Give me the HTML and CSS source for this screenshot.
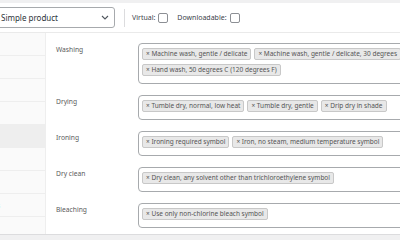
FILE: index.html
```html
<!DOCTYPE html>
<html>
<head>
<meta charset="utf-8">
<link rel="stylesheet" href="styles.css">
</head>
<body>
<div class="panel">
  <div class="header">
    <div class="select">
      <span class="select-text">Simple product</span>
      <svg class="chev" width="8" height="5" viewBox="0 0 8 5"><path d="M1 1 L4 4 L7 1" fill="none" stroke="#50575e" stroke-width="1.1"/></svg>
    </div>
    <div class="sep"></div>
    <label class="opt">Virtual: <span class="cb"></span></label>
    <label class="opt">Downloadable: <span class="cb"></span></label>
  </div>
  <div class="body">
    <ul class="tabs">
      <li class="tab"></li>
      <li class="tab"></li>
      <li class="tab"></li>
      <li class="tab"></li>
      <li class="tab active"></li>
      <li class="tab"></li>
      <li class="tab"></li>
      <li class="tab"><span class="tab-text">s</span></li>
      <li class="tab last"></li>
    </ul>
    <div class="main">
      <div class="field">
        <div class="label">Washing</div>
        <ul class="box">
          <li class="tag">× Machine wash, gentle / delicate</li>
          <li class="tag">× Machine wash, gentle / delicate, 30 degrees</li>
          <li class="tag">× Hand wash, 50 degrees C (120 degrees F)</li>
        </ul>
      </div>
      <div class="field">
        <div class="label">Drying</div>
        <ul class="box">
          <li class="tag">× Tumble dry, normal, low heat</li>
          <li class="tag">× Tumble dry, gentle</li>
          <li class="tag">× Drip dry in shade</li>
        </ul>
      </div>
      <div class="field">
        <div class="label">Ironing</div>
        <ul class="box">
          <li class="tag">× Ironing required symbol</li>
          <li class="tag">× Iron, no steam, medium temperature symbol</li>
        </ul>
      </div>
      <div class="field">
        <div class="label">Dry clean</div>
        <ul class="box">
          <li class="tag">× Dry clean, any solvent other than trichloroethylene symbol</li>
        </ul>
      </div>
      <div class="field">
        <div class="label">Bleaching</div>
        <ul class="box">
          <li class="tag">× Use only non-chlorine bleach symbol</li>
        </ul>
      </div>
    </div>
  </div>
</div>
</body>
</html>
```
FILE: styles.css
```css
html, body {
  margin: 0;
  padding: 0;
}
body {
  width: 400px;
  height: 240px;
  overflow: hidden;
  background: #f0f0f1;
  font-family: "Noto Sans", "Open Sans", sans-serif;
  color: #3c434a;
}
.panel {
  margin-top: 3px;
  margin-left: -20px;
  width: 460px;
  background: #fff;
  border-bottom: 1px solid #dcdcde;
}
.header {
  display: flex;
  align-items: center;
  height: 29px;
  border-bottom: 1px solid #eaeaea;
}
.select {
  display: flex;
  align-items: center;
  justify-content: space-between;
  box-sizing: border-box;
  width: 135px;
  height: 21px;
  padding: 0 5px 0 20px;
  border: 1px solid #a7aaad;
  border-radius: 3px;
  font-size: 8px;
  color: #2c3338;
}
.chev {
  display: block;
}
.sep {
  width: 1px;
  height: 18px;
  background: #dcdcde;
  margin: 0 7px 0 9px;
}
.opt {
  display: flex;
  align-items: center;
  font-size: 7px;
  color: #3c434a;
  margin-right: 9px;
}
.cb {
  display: inline-block;
  width: 8px;
  height: 8px;
  margin-left: 3px;
  border: 1px solid #8c8f94;
  border-radius: 2px;
  background: #fff;
}
.body {
  display: flex;
}
.tabs {
  list-style: none;
  margin: 0;
  padding: 0;
  width: 68px;
  background: #fafafa;
  border-right: 1px solid #eeeeee;
}
.tab {
  height: 22px;
  border-bottom: 1px solid #eeeeee;
  display: flex;
  align-items: center;
  justify-content: flex-end;
  font-size: 7px;
  color: #555555;
}
.tab.active {
  background: #eeeeee;
}
.tab.last {
  height: 14px;
  border-bottom: none;
}
.tab-text {
  margin-right: 45px;
}
.main {
  flex: 1;
  padding: 10px 0 6px 10px;
}
.field {
  display: flex;
  margin-bottom: 11px;
}
.field:last-child {
  margin-bottom: 0;
}
.label {
  width: 82px;
  flex: none;
  font-size: 6.7px;
  color: #5a5a5a;
  padding-top: 2px;
}
.box {
  list-style: none;
  margin: 0;
  padding: 0 0 7px 0;
  width: 300px;
  flex: none;
  border: 1px solid #a7aaad;
  border-radius: 4px;
  display: flex;
  flex-wrap: wrap;
  align-content: flex-start;
}
.tag {
  box-sizing: border-box;
  height: 12px;
  line-height: 10px;
  margin: 4px 0 0 3px;
  padding: 0 3px;
  background: #e8e8e8;
  border: 1px solid #c8c8c8;
  border-radius: 2px;
  font-size: 6.5px;
  color: #555555;
  white-space: nowrap;
}
```
